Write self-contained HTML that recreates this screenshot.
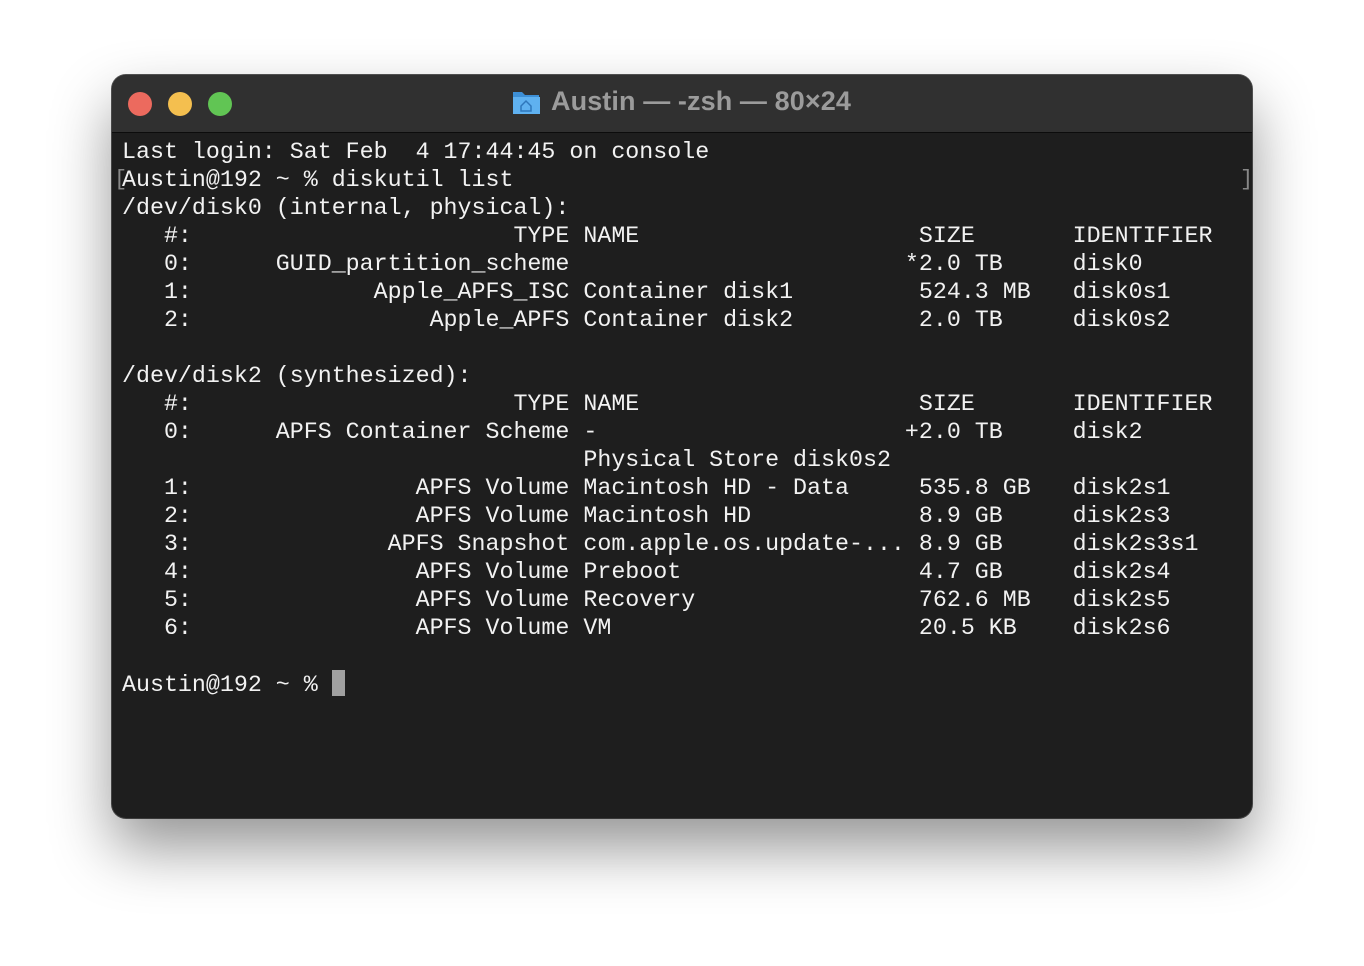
<!DOCTYPE html>
<html><head><meta charset="utf-8"><style>
html,body{margin:0;padding:0;background:#fff;width:1364px;height:966px;overflow:hidden;position:relative}
.win{position:absolute;left:112px;top:75px;width:1140px;height:743px;border-radius:14px;background:#1e1e1e;box-shadow:0 30px 60px rgba(0,0,0,.42),0 0 0 1px #555;overflow:hidden}
.tb{position:absolute;left:0;top:0;width:100%;height:57px;background:#303030;border-bottom:1px solid #0c0c0c}
.dot{position:absolute;top:17px;width:24px;height:24px;border-radius:50%}
.title{position:absolute;left:439px;top:11px;font:bold 27px "Liberation Sans",sans-serif;color:#9b9b9b;white-space:nowrap;letter-spacing:0.1px}
pre{position:absolute;left:10px;top:63px;margin:0;font:23.3px/28px "Liberation Mono",monospace;color:#f2f2f2}
.cur{display:inline-block;width:13px;height:26px;background:#a0a0a0;vertical-align:-5px}
.br{position:absolute;color:#888;font:22px "Liberation Mono",monospace}
</style></head><body>
<div class="win">
<div class="tb">
<div class="dot" style="left:16px;background:#ec6a5e"></div>
<div class="dot" style="left:56px;background:#f4bf4f"></div>
<div class="dot" style="left:96px;background:#61c554"></div>
<svg style="position:absolute;left:400px;top:14px" width="28" height="26" viewBox="0 0 28 26"><path d="M1 3h9l3 3h14v19H1z" fill="#3d8fd6"/><rect x="1" y="8" width="27" height="17" fill="#5fb1f0"/><path d="M9 17l5-5 5 5v5H9z" fill="none" stroke="#2f77bb" stroke-width="1.5"/></svg>
<div class="title">Austin — -zsh — 80×24</div>
</div>
<span class="br" style="left:2px;top:92px">[</span><span class="br" style="left:1128px;top:92px">]</span>
<pre>Last login: Sat Feb  4 17:44:45 on console
Austin@192 ~ % diskutil list
/dev/disk0 (internal, physical):
   #:                       TYPE NAME                    SIZE       IDENTIFIER
   0:      GUID_partition_scheme                        *2.0 TB     disk0
   1:             Apple_APFS_ISC Container disk1         524.3 MB   disk0s1
   2:                 Apple_APFS Container disk2         2.0 TB     disk0s2

/dev/disk2 (synthesized):
   #:                       TYPE NAME                    SIZE       IDENTIFIER
   0:      APFS Container Scheme -                      +2.0 TB     disk2
                                 Physical Store disk0s2
   1:                APFS Volume Macintosh HD - Data     535.8 GB   disk2s1
   2:                APFS Volume Macintosh HD            8.9 GB     disk2s3
   3:              APFS Snapshot com.apple.os.update-... 8.9 GB     disk2s3s1
   4:                APFS Volume Preboot                 4.7 GB     disk2s4
   5:                APFS Volume Recovery                762.6 MB   disk2s5
   6:                APFS Volume VM                      20.5 KB    disk2s6

Austin@192 ~ % <span class="cur"></span></pre>
</div>
</body></html>
